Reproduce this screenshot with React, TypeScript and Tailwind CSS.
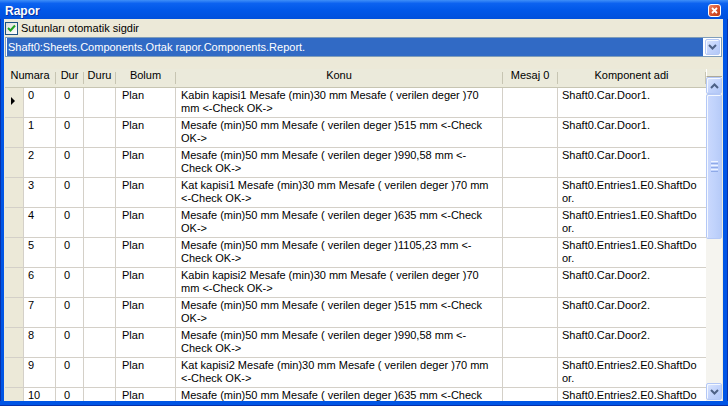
import React from 'react'

type Row = {
  num: string
  konu: string[]
  komp: string[]
}

const rows: Row[] = [
  { num: '0', konu: ['Kabin kapisi1 Mesafe (min)30 mm Mesafe ( verilen deger )70', 'mm <-Check OK->'], komp: ['Shaft0.Car.Door1.'] },
  { num: '1', konu: ['Mesafe (min)50 mm Mesafe ( verilen deger )515 mm <-Check', 'OK->'], komp: ['Shaft0.Car.Door1.'] },
  { num: '2', konu: ['Mesafe (min)50 mm Mesafe ( verilen deger )990,58 mm <-', 'Check OK->'], komp: ['Shaft0.Car.Door1.'] },
  { num: '3', konu: ['Kat kapisi1 Mesafe (min)30 mm Mesafe ( verilen deger )70 mm', '<-Check OK->'], komp: ['Shaft0.Entries1.E0.ShaftDo', 'or.'] },
  { num: '4', konu: ['Mesafe (min)50 mm Mesafe ( verilen deger )635 mm <-Check', 'OK->'], komp: ['Shaft0.Entries1.E0.ShaftDo', 'or.'] },
  { num: '5', konu: ['Mesafe (min)50 mm Mesafe ( verilen deger )1105,23 mm <-', 'Check OK->'], komp: ['Shaft0.Entries1.E0.ShaftDo', 'or.'] },
  { num: '6', konu: ['Kabin kapisi2 Mesafe (min)30 mm Mesafe ( verilen deger )70', 'mm <-Check OK->'], komp: ['Shaft0.Car.Door2.'] },
  { num: '7', konu: ['Mesafe (min)50 mm Mesafe ( verilen deger )515 mm <-Check', 'OK->'], komp: ['Shaft0.Car.Door2.'] },
  { num: '8', konu: ['Mesafe (min)50 mm Mesafe ( verilen deger )990,58 mm <-', 'Check OK->'], komp: ['Shaft0.Car.Door2.'] },
  { num: '9', konu: ['Kat kapisi2 Mesafe (min)30 mm Mesafe ( verilen deger )70 mm', '<-Check OK->'], komp: ['Shaft0.Entries2.E0.ShaftDo', 'or.'] },
  { num: '10', konu: ['Mesafe (min)50 mm Mesafe ( verilen deger )635 mm <-Check', 'OK->'], komp: ['Shaft0.Entries2.E0.ShaftDo', 'or.'] },
]

const Lines = ({ lines }: { lines: string[] }) => (
  <>
    {lines.map((l, i) => (
      <div key={i}>{l}</div>
    ))}
  </>
)

const Chevron = ({ up = false }: { up?: boolean }) => (
  <svg width="9" height="6" viewBox="0 0 9 6">
    <path
      d={up ? 'M1 5 L4.5 1.5 L8 5' : 'M1 1 L4.5 4.5 L8 1'}
      fill="none"
      stroke="#4D6185"
      strokeWidth="2"
    />
  </svg>
)

const XpButton = ({ children, className = '' }: { children?: React.ReactNode; className?: string }) => (
  <div
    className={`flex items-center justify-center rounded-[2px] border border-[#B4C8F6] bg-[linear-gradient(135deg,#DCE6FD_0%,#C3D4FC_50%,#B3C8F7_100%)] shadow-[inset_1px_1px_0_#F4F8FF] ${className}`}
  >
    {children}
  </div>
)

const HeaderCell = ({ label, className }: { label: string; className: string }) => (
  <div className={`flex h-full ${className}`}>
    <div className="flex-1 text-center">{label}</div>
    <div className="my-[3px] w-px bg-[#C7C5B2]" />
  </div>
)

export default function App() {
  return (
    <div className="flex h-[406px] w-[728px] flex-col overflow-hidden bg-[#0055E5] font-['Liberation_Sans',Arial,sans-serif] text-[11px] text-black">
      {/* title bar */}
      <div className="flex h-[19px] shrink-0 items-start justify-between bg-[linear-gradient(to_bottom,#3F8FF8_0%,#0C62F0_18%,#0057E8_55%,#0050DC_100%)]">
        <div className="pl-[5px] pt-[4px] text-[12px] font-bold leading-[15px] text-white [text-shadow:1px_1px_0_#0A2E9A]">
          Rapor
        </div>
        <div className="mr-[7px] mt-[4px] flex h-[13px] w-[13px] items-center justify-center rounded-[3px] border border-white bg-[linear-gradient(135deg,#ED8A6C_0%,#D9532F_50%,#BC3A17_100%)]">
          <svg width="7" height="7" viewBox="0 0 7 7">
            <path d="M1 1 L6 6 M6 1 L1 6" stroke="#fff" strokeWidth="1.8" />
          </svg>
        </div>
      </div>

      <div className="flex min-h-0 flex-1">
        <div className="w-[4px] shrink-0 border-l border-[#0831A9] bg-[#0055E5]" />

        <div className="flex min-w-0 flex-1 flex-col bg-[#ECE9D8]">
          {/* checkbox row */}
          <div className="flex h-[18px] shrink-0 items-start pl-[1px] pt-[3px]">
            <div className="flex h-[13px] w-[13px] items-center justify-center border border-[#1C5180] bg-[linear-gradient(135deg,#DCDCD7_0%,#FFFFFF_100%)]">
              <svg width="9" height="9" viewBox="0 0 9 9">
                <path d="M1 4 L3.5 6.5 L8 1.5" fill="none" stroke="#21A121" strokeWidth="2" />
              </svg>
            </div>
            <span className="ml-[3px] leading-[13px]">Sutunları otomatik sigdir</span>
          </div>

          {/* combo */}
          <div className="mx-[1px] flex h-[20px] shrink-0 border border-[#7F9DB9] bg-white pl-[1px]">
            <div className="flex min-w-0 flex-1 items-center bg-[#316AC5] pl-[1px] leading-[13px] text-white">
              Shaft0:Sheets.Components.Ortak rapor.Components.Report.
            </div>
            <XpButton className="my-px ml-[2px] mr-px w-[15px]">
              <Chevron />
            </XpButton>
          </div>

          <div className="h-[12px] shrink-0" />

          {/* grid */}
          <div className="ml-[1px] mr-[1px] flex min-h-0 flex-1 overflow-hidden">
            <div className="flex w-[701px] shrink-0 flex-col overflow-hidden">
              <div className="flex h-[19px] shrink-0 border-b border-[#C7C5B2] bg-[#EBEADB] leading-[13px]">
                <HeaderCell label="Numara" className="w-[51px]" />
                <HeaderCell label="Dur" className="w-[28px]" />
                <HeaderCell label="Duru" className="w-[32px]" />
                <HeaderCell label="Bolum" className="w-[60px]" />
                <HeaderCell label="Konu" className="w-[327px]" />
                <HeaderCell label="Mesaj 0" className="w-[55px]" />
                <HeaderCell label="Komponent adi" className="w-[148px]" />
              </div>
              <div className="bg-white">
                {rows.map((r, i) => (
                  <div key={i} className="flex h-[30px] shrink-0 border-b border-[#D4D0C8] leading-[13px]">
                    <div className="w-[19px] shrink-0 border-r border-[#D4D0C8] bg-[#ECE9D8] pl-[6px] pt-[9px]">
                      {i === 0 && (
                        <svg width="4" height="8" viewBox="0 0 4 8">
                          <path d="M0 0 L4 4 L0 8 Z" fill="#000" />
                        </svg>
                      )}
                    </div>
                    <div className="w-[32px] shrink-0 border-r border-[#D4D0C8] pl-[4px] pt-px">{r.num}</div>
                    <div className="w-[28px] shrink-0 border-r border-[#D4D0C8] pl-[8px] pt-px">0</div>
                    <div className="w-[32px] shrink-0 border-r border-[#D4D0C8]" />
                    <div className="w-[60px] shrink-0 border-r border-[#D4D0C8] pl-[6px] pt-px">Plan</div>
                    <div className="w-[327px] shrink-0 overflow-hidden whitespace-nowrap border-r border-[#D4D0C8] pl-[5px] pt-px">
                      <Lines lines={r.konu} />
                    </div>
                    <div className="w-[55px] shrink-0 border-r border-[#D4D0C8]" />
                    <div className="w-[148px] shrink-0 overflow-hidden whitespace-nowrap pl-[4px] pt-px">
                      <Lines lines={r.komp} />
                    </div>
                  </div>
                ))}
              </div>
            </div>

            {/* vertical scrollbar */}
            <div className="flex w-[16px] shrink-0 flex-col">
              <div className="h-[8px] shrink-0 border-b border-l border-[#ACA899] border-l-white bg-[#EBEADB]" />
              <div className="flex flex-1 flex-col bg-[#F5F4EF]">
                <XpButton className="h-[17px] shrink-0">
                  <Chevron up />
                </XpButton>
                <div className="flex h-[145px] shrink-0 flex-col items-center justify-center gap-px rounded-[2px] border border-[#B4C8F6] bg-[linear-gradient(to_right,#CAD8FD_0%,#C1D3FC_50%,#B7CBF8_100%)] shadow-[inset_1px_1px_0_#F4F8FF]">
                  <div className="h-px w-[7px] bg-[#EEF4FF]" />
                  <div className="h-px w-[7px] bg-[#8FAAE8]" />
                  <div className="h-px w-[7px] bg-[#EEF4FF]" />
                  <div className="h-px w-[7px] bg-[#8FAAE8]" />
                  <div className="h-px w-[7px] bg-[#EEF4FF]" />
                  <div className="h-px w-[7px] bg-[#8FAAE8]" />
                </div>
                <div className="flex-1" />
                <XpButton className="h-[17px] shrink-0">
                  <Chevron />
                </XpButton>
                <div className="h-px shrink-0" />
              </div>
            </div>
          </div>
        </div>

        <div className="w-[5px] shrink-0 border-r border-[#0831A9] bg-[#0055E5]" />
      </div>

      <div className="h-[5px] shrink-0 border-b border-[#0831A9] bg-[#0055E5]" />
    </div>
  )
}
